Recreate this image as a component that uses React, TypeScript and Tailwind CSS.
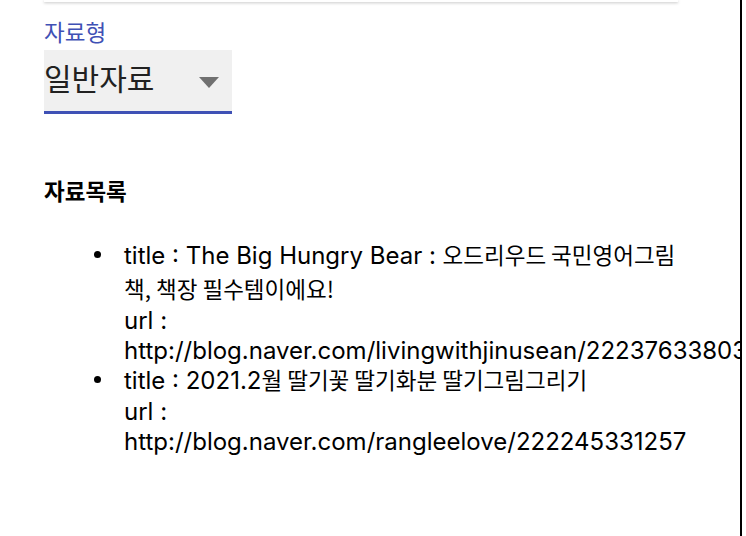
const ITEMS = [
  {
    title: 'The Big Hungry Bear : 오드리우드 국민영어그림 책, 책장 필수템이에요!',
    url: 'http://blog.naver.com/livingwithjinusean/222376338035',
  },
  {
    title: '2021.2월 딸기꽃 딸기화분 딸기그림그리기',
    url: 'http://blog.naver.com/rangleelove/222245331257',
  },
];

const KR = { fontFamily: '"Noto Sans CJK KR", sans-serif' };

// hangul runs are set a little smaller than the latin text around them
function Mixed({ text }: { text: string }) {
  const parts = text.split(/([가-힣][가-힣,!\s]*[가-힣,!]|[가-힣])/);
  return (
    <>
      {parts.map((p, i) =>
        /[가-힣]/.test(p) ? (
          <span key={i} className="text-[22.5px]" style={KR}>
            {p}
          </span>
        ) : (
          <span key={i}>{p}</span>
        )
      )}
    </>
  );
}

export default function App() {
  return (
    <div
      className="h-[536px] w-[742px] overflow-hidden border-r-2 border-black bg-white text-black"
      style={{ fontFamily: '"Inter", "Noto Sans CJK KR", sans-serif' }}
    >
      <div className="ml-[44px] w-[656px]">
        {/* bottom edge of the card above */}
        <div className="h-[2px] w-[634px] bg-white shadow-[0_1px_3px_rgba(0,0,0,0.25)]" />

        {/* Select field */}
        <div className="mt-[17px] text-[22.5px] leading-[24px] text-[#3f51b5]" style={KR}>
          자료형
        </div>
        <div className="mt-[7px] flex h-[64px] w-[188px] items-start border-b-[3px] border-[#3f51b5] bg-[#f0f0f0]">
          <span className="mt-[10px] text-[30px] leading-[34px] text-[#212121]" style={KR}>
            일반자료
          </span>
          <svg className="ml-auto mr-[13px] mt-[27px]" width="20" height="11" viewBox="0 0 20 11">
            <polygon points="0,0 20,0 10,11" fill="#707070" />
          </svg>
        </div>

        {/* List */}
        <h4 className="mt-[60px] text-[22.5px] font-bold leading-[32px]" style={KR}>
          자료목록
        </h4>
        <ul className="mt-[32px] pl-[50px] text-[24px]">
          {ITEMS.map((item, i) => (
            <li key={item.url} className={i === 1 ? 'flex -mt-[3px]' : 'flex'}>
              <span className="mr-[23px] mt-[13px] h-[7px] w-[7px] shrink-0 rounded-full bg-black" />
              <div className="min-w-0 flex-1">
                <div className="leading-[32px]">
                  title : <Mixed text={item.title} />
                </div>
                <div className="leading-[30px]">url : {item.url}</div>
              </div>
            </li>
          ))}
        </ul>
      </div>
    </div>
  );
}
